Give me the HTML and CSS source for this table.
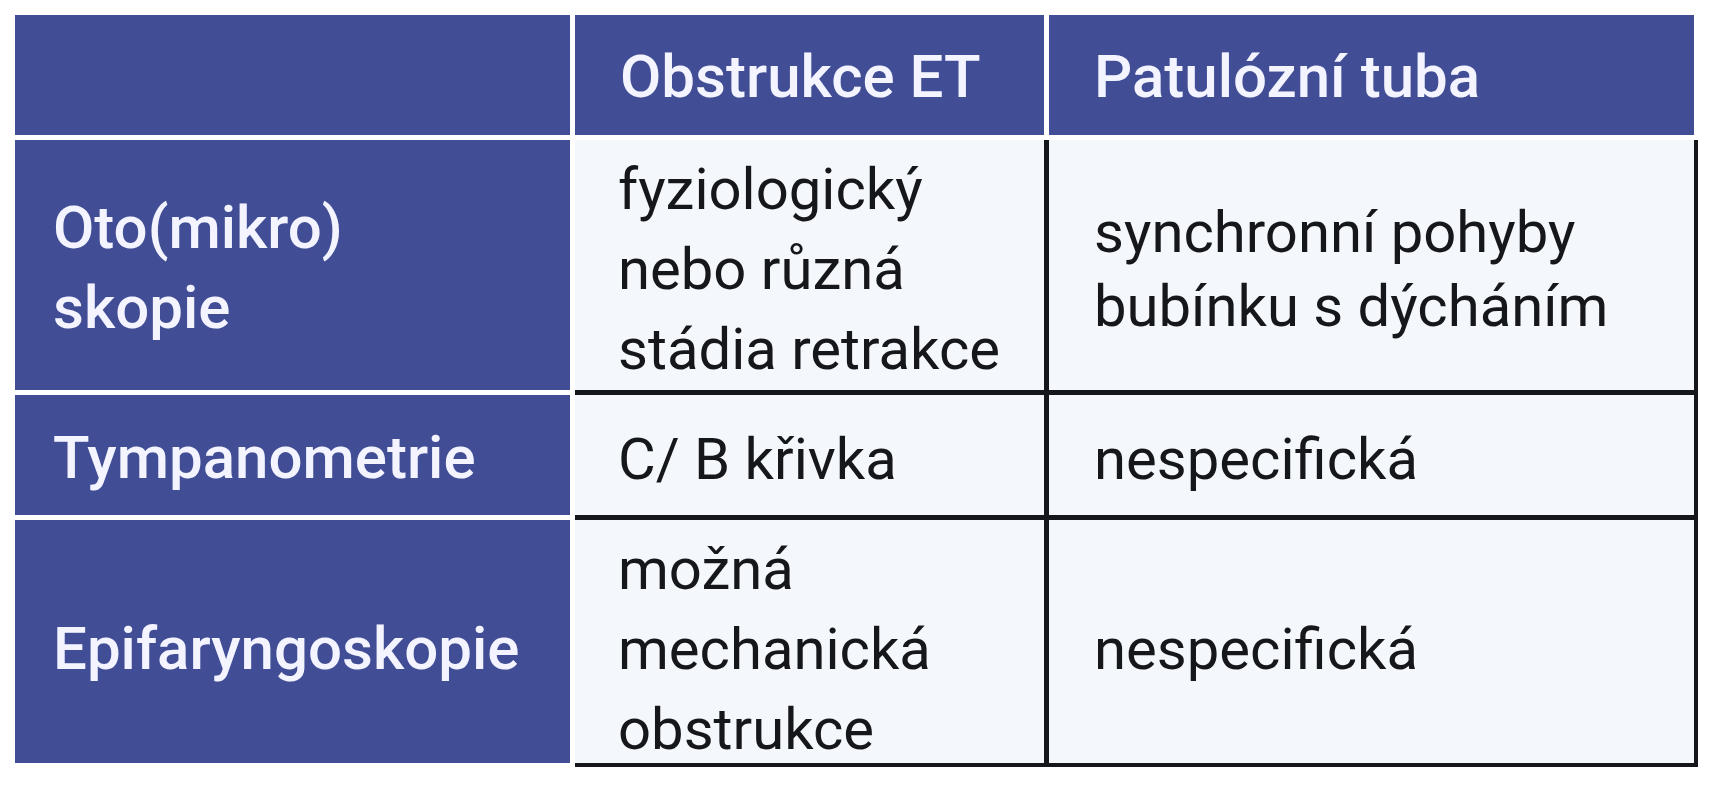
FILE: index.html
```html
<!DOCTYPE html>
<html lang="cs">
<head>
<meta charset="utf-8">
<title>Obstrukce ET vs. patulózní tuba</title>
<link rel="stylesheet" href="styles.css">
</head>
<body>
<div class="table">
  <div class="body-bg"></div>

  <div class="cell head corner"></div>
  <div class="cell head">Obstrukce ET</div>
  <div class="cell head">Patulózní tuba</div>

  <div class="cell side r1">Oto(mikro)<br>skopie</div>
  <div class="cell data c2 r1">fyziologický<br>nebo různá<br>stádia retrakce</div>
  <div class="cell data c3 r1 tight">synchronní pohyby<br>bubínku s dýcháním</div>

  <div class="cell side r2">Tympanometrie</div>
  <div class="cell data c2 r2">C/ B křivka</div>
  <div class="cell data c3 r2">nespecifická</div>

  <div class="cell side r3 low">Epifaryngoskopie</div>
  <div class="cell data c2 r3 low">možná<br>mechanická<br>obstrukce</div>
  <div class="cell data c3 r3 low">nespecifická</div>
</div>
</body>
</html>
```
FILE: styles.css
```css
html, body {
  margin: 0;
  padding: 0;
  background: #ffffff;
}

body {
  padding: 15px;
  font-family: Roboto, "Liberation Sans", Arial, sans-serif;
}

.table {
  display: grid;
  grid-template-columns: 555px 469px 645px;
  grid-template-rows: 120px 250px 120px 243px;
  gap: 5px;
  background: #ffffff;
}

.body-bg {
  grid-column: 2 / 4;
  grid-row: 2 / 5;
  margin: 0 -4px -4px 0;
  background: #15171d;
}

.cell {
  display: flex;
  flex-direction: column;
  justify-content: center;
  box-sizing: border-box;
}

.head {
  grid-row: 1;
  background: #414d95;
  color: #f3f4ff;
  font-weight: 500;
  font-size: 60px;
  line-height: 80px;
  padding-left: 45px;
  padding-top: 4px;
}

.side {
  grid-column: 1;
  background: #414d95;
  color: #f3f4ff;
  font-weight: 500;
  font-size: 60px;
  line-height: 80px;
  padding-left: 38px;
  padding-top: 5px;
}

.data {
  background: #f4f8fd;
  color: #16171b;
  font-weight: 400;
  font-size: 58px;
  line-height: 80px;
  padding-top: 8px;
}

.c2 { grid-column: 2; padding-left: 43px; }
.c3 { grid-column: 3; padding-left: 45px; }

.r1 { grid-row: 2; }
.r2 { grid-row: 3; }
.r3 { grid-row: 4; }

.tight { line-height: 74px; }
.low { padding-top: 14px; }
```
